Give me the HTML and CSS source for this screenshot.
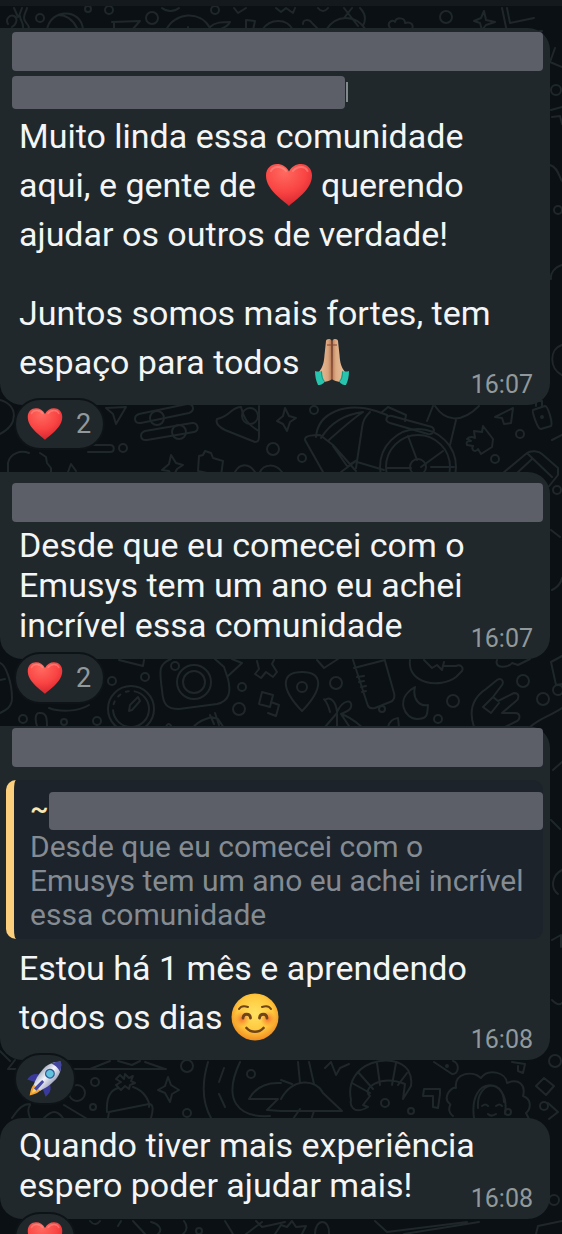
FILE: index.html
```html
<!DOCTYPE html>
<html lang="pt-BR">
<head>
<meta charset="utf-8">
<meta name="viewport" content="width=device-width, initial-scale=1">
<title>Comunidade</title>
<link rel="stylesheet" href="styles.css">
</head>
<body>
<svg class="symbols" aria-hidden="true">
  <defs>
    <radialGradient id="heart-fill" cx=".4" cy=".2" r=".85">
      <stop offset="0" stop-color="#ff6a60"/><stop offset=".55" stop-color="#f94443"/><stop offset="1" stop-color="#d3222c"/>
    </radialGradient>
    <radialGradient id="face-fill" cx=".5" cy=".42" r=".58">
      <stop offset="0" stop-color="#ffe262"/><stop offset=".65" stop-color="#ffc73c"/><stop offset="1" stop-color="#f08c22"/>
    </radialGradient>
    <radialGradient id="blush"><stop offset="0" stop-color="#f4642a" stop-opacity=".85"/><stop offset="1" stop-color="#f4842a" stop-opacity="0"/></radialGradient>
    <linearGradient id="skin-l"><stop offset="0" stop-color="#e9bd96"/><stop offset=".7" stop-color="#d9a37c"/><stop offset="1" stop-color="#b0714f"/></linearGradient>
    <linearGradient id="skin-r"><stop offset="0" stop-color="#b97a57"/><stop offset=".3" stop-color="#dcab84"/><stop offset="1" stop-color="#eac09a"/></linearGradient>
    <linearGradient id="hull"><stop offset="0" stop-color="#aeb6c8"/><stop offset=".45" stop-color="#f3f5fb"/><stop offset="1" stop-color="#a3a9c2"/></linearGradient>
    <symbol id="heart" viewBox="0 0 48 44">
      <path fill="url(#heart-fill)" d="M24 43C18 37 1 27 1 12.500C1 5.500 6 1 12 1c5 0 9.500 2.500 12 7.500C26.500 3.500 31 1 36 1c6 0 11 4.500 11 11.500C47 27 30 37 24 43Z"/>
      <path d="M6 8c1-2.500 3.500-4 7-4s6 1.500 8 4M28 8c2-2.500 5-4 8-4s5.500 1.500 6.500 4" fill="none" stroke="#ffaea6" stroke-width="2" stroke-linecap="round" opacity=".4"/>
    </symbol>
    <symbol id="face" viewBox="0 0 48 48">
      <circle cx="24" cy="24" r="23.500" fill="url(#face-fill)"/>
      <circle cx="11" cy="26" r="8" fill="url(#blush)"/><circle cx="37" cy="26" r="8" fill="url(#blush)"/>
      <g fill="none" stroke="#70441b" stroke-linecap="round">
        <path stroke-width="2" d="M8 16c1.500-2.500 5-3.500 9-2M31 14c4-1.500 7.500-.5 9 2"/>
        <path stroke-width="2.800" d="M12 25c.5-5 7-5 7.500 0M28.500 25c.5-5 7-5 7.500 0"/>
        <path stroke-width="2.600" d="M15.500 35c4.500 5 12.500 5 17 0"/>
      </g>
    </symbol>
    <symbol id="hands" viewBox="0 0 36 48">
      <path fill="url(#skin-l)" d="M12 3c0-2 5-3 5.500 0l.5 38c-2 2-5 2.500-8 3L5 34c4-5 5-10 5.500-17Z"/>
      <path fill="url(#skin-r)" d="M24 3c0-2-5-3-5.500 0L18 41c2 2 5 2.500 8 3l5-10c-4-5-5-10-5.500-17Z"/>
      <path fill="none" stroke="#85472f" stroke-width="1.200" d="M18 3v38M13 7h10"/>
      <path fill="#28c4ad" d="M1 33c3 1 6 .5 7-.5 0 5 1 9 3 11-2 3-5 3.500-7 3.500C2 43 1 38 1 33ZM35 33c-3 1-6 .5-7-.5 0 5-1 9-3 11 2 3 5 3.500 7 3.500 2-4 3-9 3-14Z"/>
      <path fill="none" stroke="#16937f" d="M7.500 33.500c0 5 1 8 3 10M28.500 33.500c0 5-1 8-3 10"/>
    </symbol>
    <symbol id="rocket" viewBox="0 0 40 40">
      <g transform="rotate(43 20 20)">
        <path fill="#f6a12c" d="M15 32h10c0 5-2 8-5 13-3-5-5-8-5-13Z"/><path fill="#ffd268" d="M17.500 32h5c0 4-1 6-2.500 9-1.500-3-2.500-5-2.500-9Z"/>
        <path fill="#3a3a9c" d="M13 20c-6 3-8 7-7 14l8-4ZM27 20c6 3 8 7 7 14l-8-4Z"/>
        <path fill="url(#hull)" d="M20-6c7 6 9 13 9 20 0 8-2 14-4 19H15c-2-5-4-11-4-19 0-7 2-14 9-20Z"/>
        <path fill="#45479f" d="M20-6c3.500 3 5.500 5.500 7 9-4-2-10-2-14 0 1.500-3.500 3.500-6 7-9Z"/>
        <circle cx="20" cy="12" r="5.500" fill="#315a95"/><circle cx="20" cy="12" r="4" fill="#61c2de"/>
        <path fill="#4448a2" d="M18.500 23h3l.5 13h-4Z"/>
      </g>
    </symbol>
  </defs>
</svg>

<main class="chat">
  <svg class="wallpaper" viewBox="0 0 562 1234" preserveAspectRatio="xMidYMin slice" aria-hidden="true">
    <!-- top strip -->
    <path d="M14 8l4 9M22 8l-3 8M8 24c-3-5 2-10 6-8s3 8-2 11M20 16c0 5 4 6 3 13M27 8c-1 5-5 8-2 13s5 5 3 9M47 30c3-22 35-22 36 0M58 15c10 0 16 7 19 13M112 22l28-1-8 9M114 23v7M166 30c9-18 34-20 44-2M210 27c5-5 12-5 20-5-3 6-8 6-12 8M188 27v2M162 8c5 4 12 4 17 0M234 8l4 5 8-5M246 20l9 1-2 9-7-1ZM262 30c8-12 25-12 31 0M303 24c0-5 6-5 9-1l6 6M326 30c10-16 30-16 40 0M344 8l14 18M352 8l-8 10M360 8c6 6 6 12 3 18M276 8l5 4 5-4 7 5 2-5M318 8c3 4 7 4 10 0M390 28c-4-6 3-9 5-6 1-5 10-5 10 1 6-2 9 2 7 6M484 11l2 9 9 2-9 3-4 5-2-7-6-2 7-3ZM502 8l5 24M507 8l3 15 24-5M508 35l34-4M555 48l-5 14 12 5"/>
    <circle cx="40" cy="18" r="4"/><circle cx="88" cy="9" r="3"/><circle cx="109" cy="10" r="4"/><circle cx="152" cy="18" r="6"/><circle cx="215" cy="10" r="4"/><circle cx="446" cy="17" r="6"/>
    <!-- right margin -->
    <path d="M551 110l11-3M552 117l8-1 2 8M550 165c8 2 9 12 12 16M562 265c-7 2-12 8-11 14M562 345c-13 4-13 24 0 30M552 440l10-5M551 530l9 7M552 590c6-3 9-7 10-12M553 770l9-8M551 820l9 9M562 870c-10 5-12 18-4 24M552 940l9-5v12M552 1000c5 5 8 5 10 3"/>
    <circle cx="556" cy="90" r="5"/><circle cx="558" cy="210" r="4"/><circle cx="557" cy="490" r="4"/><circle cx="558" cy="690" r="5"/>
    <!-- between first and second -->
    <path d="M0 400c18 5 19 24 0 34M106 408l20-1-10 17-3-10ZM88 445h22c5 0 5 7 0 7H88M8 472v-9c2-10 13-13 21-10M40 453l6 4 1 6 4 5v5M68 472l3-8 5 7M162 470l7-6 2-9 5 8 7 2-6 4-4 8-4-6ZM199 456l4-1 2-4 6 2 2 5 10 3-2 15-23-5ZM235 472c5-9 14-9 20 0M260 472c4-8 15-9 22 0"/>
    <path d="M139 414l48-10c7-1 8 7 2 9l-48 10c-7 1-8-7-2-9ZM145 431l47-8c6-1 8 8 2 9l-47 8c-7 1-8-7-2-9ZM241 407c-10 0-10 9-24 12-2 5 2 8 8 11l30 12c4 0 4-3 4-7v-29M241 407c3 12 7 18 18 24"/>
    <circle cx="157" cy="418" r="7"/><circle cx="179" cy="432" r="7"/><circle cx="250" cy="416" r="8"/><circle cx="123" cy="448" r="4"/><circle cx="273" cy="449" r="6"/>
    <path d="M277 421l6-5 2-8 4 8 7 2-6 4-3 9-4-7ZM305 440l18 32M305 440c-1-5 10-5 15-5l13 10 23 26M316 437c2-25 30-35 60-26M321 438c10-16 26-24 42-26M329 440c10-9 22-20 34-28M376 411l11 4M333 446l14 20 10-6M356 461l-15 11M370 412c-5 5-7 8-8 16l-6 40M357 462l27 8M381 413l7-6 18 8-1 6M392 416l40 11c4 3 1 8-4 7l-38-11c-6-2-4-8 2-7ZM433 406l-6 15M435 406c10 15 26 18 44 0M456 420l-6 25M408 436l9 24M443 451l-22 16M387 468h24M431 467h23"/>
    <circle cx="418" cy="467" r="38"/><circle cx="418" cy="467" r="32"/><circle cx="418" cy="467" r="8"/><circle cx="314" cy="410" r="4"/><circle cx="302" cy="458" r="4"/><circle cx="520" cy="434" r="4"/><circle cx="495" cy="459" r="4"/>
    <path d="M467 439c3-3 6-2 8-1l-1-7 8 1 1-6 10 13-1 8-11 7-3-5c-3 4-7 1-5-3l-6-1c-1-3 0-4 4-4ZM495 417l18-9-2 15-7 1-2-6ZM533 410l12-4c3 0 8 17 6 20l-10 3c-4 0-9-18-8-19ZM536 406v-5h6v5M503 473l24-20c4-3 12-2 15 1l16 14v7l-12 15M528 454l24 23M517 473l15-14"/><circle cx="542" cy="417" r="1"/>
    <!-- between second and third -->
    <path d="M0 663c6 2 12 20 12 35 0 10-8 13-12 15M0 680l5-1M49 708c10 4 29 4 40-3M37 726c-2-5-2-13 2-13 7-1 8 4 8 13M119 660l24 6 1-6M171 659c-12 5-12 10-9 31 1 15 5 19 17 19l38-5c13-3 14-13 11-25l-4-12-9-8M228 676l14-13-10-4M257 661l2 8-4 5 6 4 5-6 7 5 4-5-5-8 2-4M262 692l11 3-3 12-11-3ZM271 702l8 3-3 11-8-3M193 728c5-8 12-8 18-11l7 2 6 9M210 715l4 9M215 713l4 12M166 727c2-5 4-3 6 0"/>
    <circle cx="131" cy="709" r="23"/><circle cx="131" cy="709" r="18" stroke-dasharray="55 6 3 6 3 6 3 6"/><path d="M129 711l1-6 8-8 2 4-8 9Z"/><circle cx="194" cy="682" r="17"/><circle cx="194" cy="682" r="11"/><circle cx="175" cy="666" r="4"/><circle cx="112" cy="681" r="4"/><circle cx="145" cy="677" r="4"/><circle cx="23" cy="719" r="4"/><circle cx="64" cy="722" r="3"/><circle cx="97" cy="721" r="4"/><circle cx="242" cy="687" r="4"/><circle cx="239" cy="709" r="6"/>
    <path d="M302 711c-24-25-19-39 0-39s24 14 0 39ZM317 660l7 8 14-9M353 660l14 43c1 5 4 6 8 5l15-6c4-1 5-5 4-9l-9-32M354 668l31-8M357 677l7-1M359 682l5-1M361 687l5-1M362 692l4-1M410 660c-3 24 30 29 46 17l6-6c2-4-2-7-6-5h-12M424 660l8 8 5-3 5 5 2-8M415 687c-21 12-10 32 2 32s10-6 11-14c-8 2-16-6-13-18ZM330 712c-3-12-8-14-5-12 5-4 11 1 12 12 6-13 16-13 14-5-1 4-6 5-10 7 10 3 16 9 22 14M337 713l-12 14M337 714v14M341 714l8 12M388 727c2-8 7-8 10-9l1 9M474 727c-6-18 0-30 12-38l11-9c5-3 7 2 5 5l-9 12 5 4 16-8c6 0 5 6 2 8l-14 12h13c6 0 6 7 0 9l-10 5M493 697l-10 10 8 6 8-10M497 660c-3 9 11 8 15 3l6 2 12-6M562 656l-11 6 5 23 6-1M530 727c10-9 20-11 32-19"/>
    <circle cx="302" cy="687" r="5"/><circle cx="336" cy="683" r="6"/><circle cx="382" cy="709" r="3"/><circle cx="453" cy="701" r="6"/><circle cx="438" cy="719" r="4"/><circle cx="523" cy="681" r="6"/><circle cx="543" cy="699" r="6"/>
    <!-- between third and fourth -->
    <path d="M0 1051l10 10M8 1069h158M8 1069l7-9M90 1069l20-8M118 1061l14 4 8-4M145 1062l20 7M64 1105l25 15M12 1118c7-10 11-14 18-14M44 1118c8-8 13-8 19 0M30 1105c-3 4-2 8 0 13M107 1112c-1-15 4-23 12-24M133 1087c12 4 17 15 16 20M109 1112l40-8c5 0 4 7 2 14M109 1112l-1 6M116 1085l5-3-5-3 4-4 4 4 1-5 4 4 4-2-2 5 4 2-5 2-1 4-4-3-4 4ZM158 1090l7-4 3-9 3 8 8 5-7 4-2 8-5-9ZM208 1062c-6 20-6 40 3 56M224 1068l-5 14M219 1094l6 13M240 1062c-18 38-2 56 30 54M281 1083c-16-1-26 5-32 16h29l-11 11 14 1"/>
    <circle cx="77" cy="1093" r="8"/><circle cx="95" cy="1082" r="4"/><circle cx="93" cy="1107" r="3"/><circle cx="187" cy="1066" r="6"/><circle cx="251" cy="1074" r="4"/><circle cx="187" cy="1113" r="4"/>
    <path d="M281 1099c12-22 35-20 42-6l19 18h-61M298 1062l2 21M309 1062l5 22M300 1109l-7 10M314 1111l-3 9M325 1068l6-6 5 13 4-7 9-4M281 1080l11 4M351 1100c-8-38 43-50 57-30 5 9 3 12 3 16l-8 13 2-15c-25-10-44 5-35 12l-7 9 5 2c-16 9-18-3-17-7ZM352 1083l18 10M358 1072l15 17M377 1063l3 22M396 1063l-4 22M407 1073l-9 12M424 1089h16v5l-2 14-5-1v-11h-10ZM434 1062l18 12c7 1 8-11 1-13M453 1116c-8-6-1-12-3-12-8-6 1-18 6-16-2-15 16-18 25-10 7-10 25-6 26 5 12-5 19 2 16 13 9 3 8 13 3 17l3 6M474 1118c-6-44 37-42 31-4M478 1108c-2-26 25-31 26-6M482 1106c3-2 4-2 6 0M496 1106c3-2 4-2 6 0M488 1114c2 2 5 2 8 0M512 1062l13 2-2 9-5-2v-5M544 1078l10 8-8 9-10-9ZM548 1103l10 9-9 7"/>
    <circle cx="385" cy="1103" r="4"/><circle cx="411" cy="1111" r="3"/><circle cx="447" cy="1066" r="1"/><circle cx="555" cy="1061" r="6"/><circle cx="544" cy="1106" r="4"/><circle cx="508" cy="1112" r="3"/>
    <!-- below fourth -->
    <path d="M90 1221c4 5 8 3 10 0M118 1226l3-5M133 1221l12 13M151 1222c6 1 13 7 7 12M184 1221c4 5 3 10-1 13M225 1221l8 13M256 1221l6 6 23-5M246 1234l16-12M275 1234l6-9 6 2 5-6 4 6 10-1-4 8M315 1234c0-16 15-16 14 0M375 1221l12 11 80-10M404 1234l75-12M536 1234l2-8 24-5"/>
    <circle cx="199" cy="1231" r="3"/><circle cx="554" cy="1200" r="5"/>
  </svg>

  <section class="entry">
    <article class="bubble">
      <div class="redacted name"></div>
      <div class="redacted phone"></div>
      <div class="content">
        <div class="text airy">
          <p>Muito linda essa comunidade aqui, e gente de <svg class="emoji" role="img" aria-label="coração"><use href="#heart"/></svg> querendo ajudar os outros de verdade!</p>
          <p>Juntos somos mais fortes, tem espaço para todos <svg class="emoji" role="img" aria-label="mãos em oração"><use href="#hands"/></svg></p>
        </div>
        <time>16:07</time>
      </div>
    </article>
    <button class="reaction" type="button"><svg class="icon" role="img" aria-label="coração"><use href="#heart"/></svg>2</button>
  </section>

  <section class="entry">
    <article class="bubble">
      <div class="redacted name"></div>
      <div class="content">
        <div class="text"><p>Desde que eu comecei com o Emusys tem um ano eu achei incrível essa comunidade</p></div>
        <time>16:07</time>
      </div>
    </article>
    <button class="reaction" type="button"><svg class="icon" role="img" aria-label="coração"><use href="#heart"/></svg>2</button>
  </section>

  <section class="entry near">
    <article class="bubble flush">
      <div class="redacted name"></div>
      <blockquote class="quote">
        <div class="author">~<div class="redacted"></div></div>
        <p>Desde que eu comecei com o Emusys tem um ano eu achei incrível essa comunidade</p>
      </blockquote>
      <div class="content">
        <div class="text airy"><p>Estou há 1 mês e aprendendo todos os dias <svg class="emoji" role="img" aria-label="sorriso"><use href="#face"/></svg></p></div>
        <time>16:08</time>
      </div>
    </article>
    <button class="reaction single" type="button"><svg class="icon" role="img" aria-label="foguete"><use href="#rocket"/></svg></button>
  </section>

  <section class="entry">
    <article class="bubble rounded">
      <div class="content">
        <div class="text"><p>Quando tiver mais experiência espero poder ajudar mais!</p></div>
        <time>16:08</time>
      </div>
    </article>
    <button class="reaction single" type="button"><svg class="icon" role="img" aria-label="coração"><use href="#heart"/></svg></button>
  </section>
</main>
</body>
</html>
```
FILE: styles.css
```css
* { box-sizing: border-box; }
body {
  margin: 0;
  background: #0a1014;
  color: #f3f5f6;
  font-family: Roboto, "Liberation Sans", sans-serif;
}
p, blockquote { margin: 0; }
.symbols { position: absolute; width: 0; height: 0; }

.chat {
  position: relative;
  height: 100vh;
  overflow: hidden;
  padding: 22px 12px 0 0;
  border-top: 6px solid #14191d;
}
.wallpaper {
  position: absolute;
  inset: -6px 0 0;
  width: 100%;
  height: 100vh;
  fill: none;
  stroke: #20272b;
  stroke-width: 2;
  stroke-linejoin: round;
  stroke-linecap: round;
}

.entry {
  position: relative;
  display: flex;
  flex-direction: column;
  align-items: flex-start;
  margin-bottom: 22px;
}
.entry.near { margin-bottom: 13px; }

.bubble {
  width: 100%;
  padding: 4px 7px 0 6px;
  border-radius: 0 22px 22px 22px;
  background: #20282b;
}
.bubble:has(> .name:first-child + .content) { padding-top: 11px; }
.bubble.rounded { padding-top: 7px; border-top-left-radius: 22px; }
.bubble.flush { padding-top: 2px; }

.redacted {
  border-radius: 4px;
  background: #5c5e68;
}
.name { height: 39px; margin: 0 0 3px 6px; }
.phone {
  position: relative;
  width: 62%;
  height: 33px;
  margin: 5px 0 3px 6px;
}
.phone::after {
  content: "";
  position: absolute;
  left: calc(100% + 1px);
  top: 6px;
  width: 2px;
  height: 20px;
  background: #82898d;
}

.content { display: grid; }
.content > * { grid-area: 1 / 1; }
.text {
  padding: 0 50px 14px 13px;
  font-size: 34px;
  line-height: 40px;
}
.text.airy { padding-bottom: 18px; line-height: 49px; }
.text p + p { margin-top: 30px; }
time {
  place-self: end;
  padding: 0 10px 6px 0;
  color: #91999d;
  font-size: 25px;
  line-height: 28px;
}
.emoji {
  width: 48px;
  height: 48px;
  margin: -5px 0 1px;
  vertical-align: middle;
}

.quote {
  margin: 13px 0 5px;
  padding: 12px 0 7px 16px;
  border-left: 8px solid #fbcf7c;
  border-radius: 10px;
  background: #1c232a;
  color: #858b92;
  font-size: 30px;
  line-height: 34px;
}
.quote p { padding-right: 16px; }
.author {
  display: flex;
  color: #fbe6b5;
  font-size: 28px;
  font-weight: 500;
}
.author .redacted { flex: 1; height: 38px; }

.reaction {
  position: relative;
  display: flex;
  align-items: center;
  gap: 13px;
  height: 52px;
  margin: -7px 0 0 14px;
  padding: 0 12px 0 11px;
  border: 2px solid #0d1316;
  border-radius: 26px;
  background: #20282b;
  color: #91999d;
  font-family: inherit;
  font-size: 27px;
}
.reaction.single { padding: 0 11px; }
.icon { width: 36px; height: 36px; }
```
